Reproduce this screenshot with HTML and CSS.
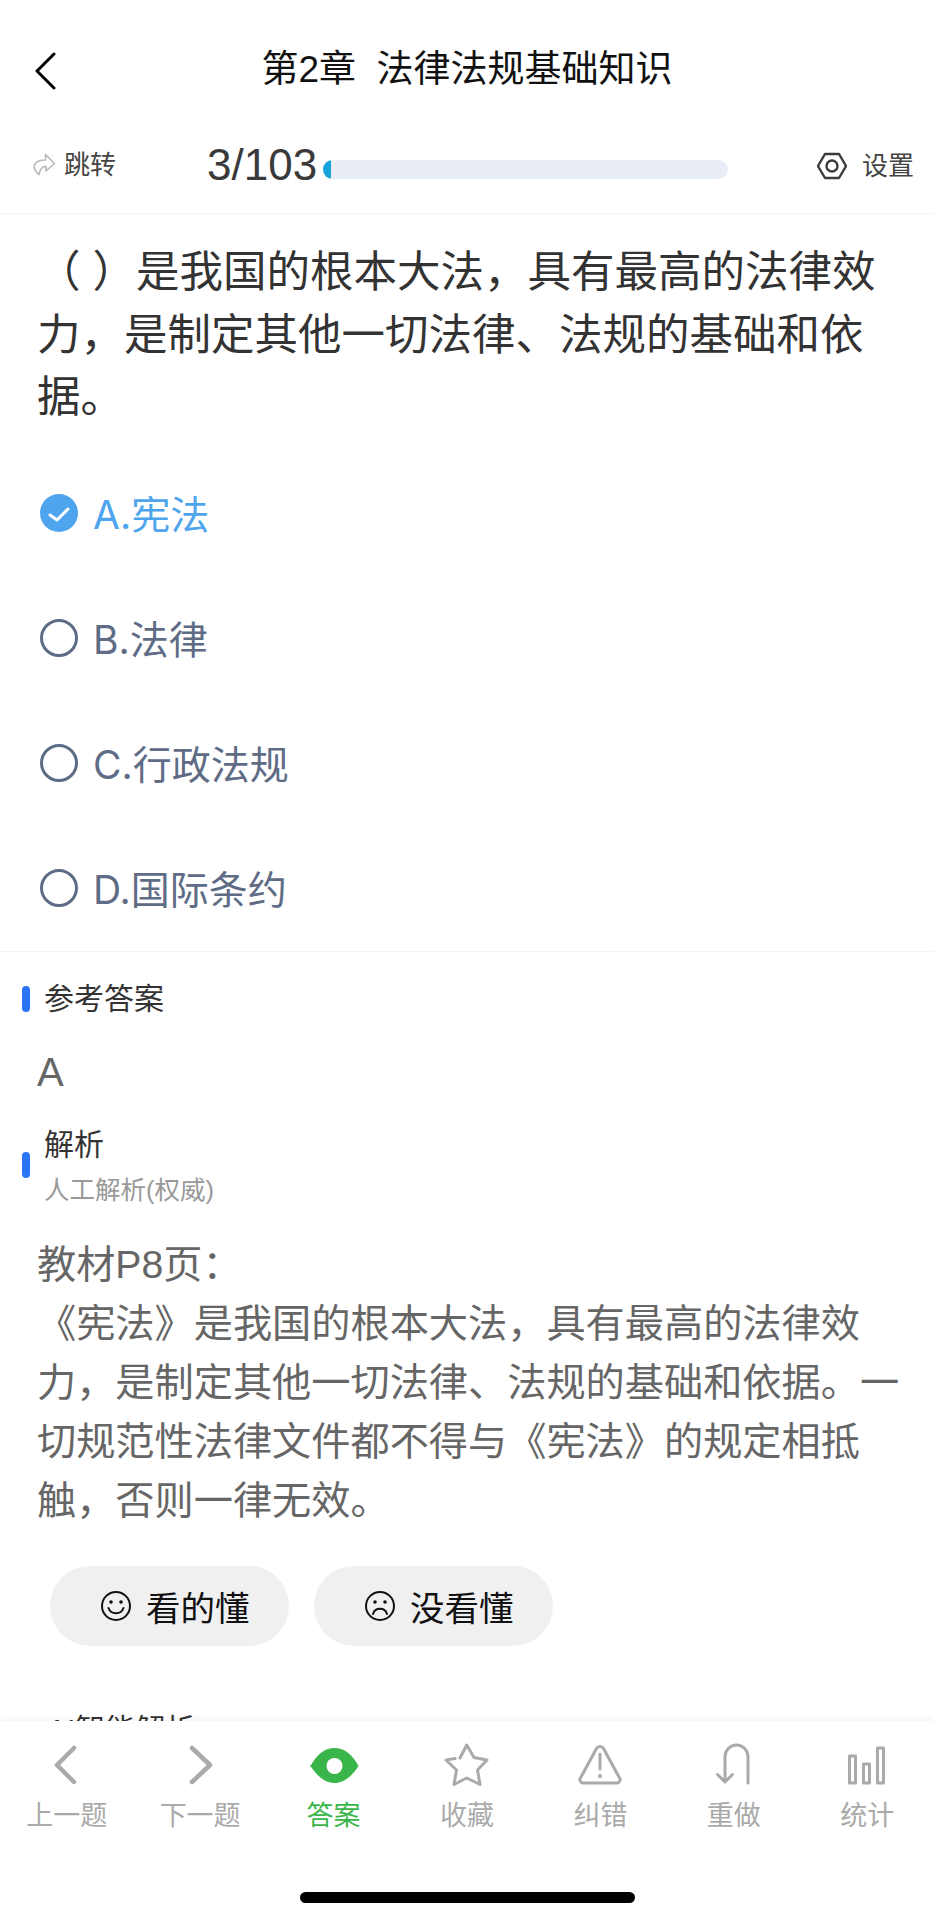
FILE: index.html
```html
<!DOCTYPE html>
<html lang="zh-CN">
<head>
<meta charset="utf-8">
<title>第2章 法律法规基础知识</title>
<link rel="stylesheet" href="styles.css">
</head>
<body>
<div class="page">
  <header class="nav">
    <svg class="back" width="24" height="38" viewBox="0 0 24 38"><path d="M20 2 L3 19 L20 36"/></svg>
    <h1 class="nav-title">第2章  法律法规基础知识</h1>
  </header>
  <div class="progress">
    <div class="jump">
      <svg class="jump-icon" width="24" height="24" viewBox="0 0 24 24"><path d="M13.5 1.5 L22.5 10.5 L14 18 V13.5 C10 13 8 16 7 21.5 C3 18 1 14 3 11 C5 7.5 10 7 13.5 7 Z"/></svg>
      <span>跳转</span>
    </div>
    <span class="count">3/103</span>
    <div class="bar"><div class="bar-fill"></div></div>
    <div class="settings">
      <svg class="gear" width="30" height="28" viewBox="0 0 30 28"><path d="M8 2 H22 L29 14 L22 26 H8 L1 14 Z"/><circle cx="15" cy="14" r="5.5"/></svg>
      <span>设置</span>
    </div>
  </div>

  <p class="question">（ ）是我国的根本大法，具有最高的法律效力，是制定其他一切法律、法规的基础和依据。</p>

  <ul class="options">
    <li class="option selected">
      <svg class="radio" width="38" height="38" viewBox="0 0 38 38"><circle class="radio-on" cx="19" cy="19" r="19"/><path class="radio-check" d="M10 21 L17 26 L28 15"/></svg>
      <span>A.宪法</span>
    </li>
    <li class="option">
      <svg class="radio" width="38" height="38" viewBox="0 0 38 38"><circle class="radio-off" cx="19" cy="19" r="17.5"/></svg>
      <span>B.法律</span>
    </li>
    <li class="option">
      <svg class="radio" width="38" height="38" viewBox="0 0 38 38"><circle class="radio-off" cx="19" cy="19" r="17.5"/></svg>
      <span>C.行政法规</span>
    </li>
    <li class="option">
      <svg class="radio" width="38" height="38" viewBox="0 0 38 38"><circle class="radio-off" cx="19" cy="19" r="17.5"/></svg>
      <span>D.国际条约</span>
    </li>
  </ul>

  <section class="answer">
    <div class="sec-head"><i class="sec-mark"></i><div class="sec-name">参考答案</div></div>
    <div class="answer-value">A</div>
  </section>

  <section class="analysis">
    <div class="sec-head">
      <i class="sec-mark"></i>
      <div>
        <div class="sec-name">解析</div>
        <div class="sec-sub">人工解析(权威)</div>
      </div>
    </div>
    <p class="analysis-text">教材P8页：<br>《宪法》是我国的根本大法，具有最高的法律效力，是制定其他一切法律、法规的基础和依据。一切规范性法律文件都不得与《宪法》的规定相抵触，否则一律无效。</p>
    <div class="feedback">
      <button class="fb-btn">
        <svg class="face" width="30" height="30" viewBox="0 0 30 30"><circle class="face-ring" cx="15" cy="15" r="14"/><circle class="face-eye" cx="10" cy="11" r="1.8"/><circle class="face-eye" cx="20" cy="11" r="1.8"/><path class="face-ring" d="M7.5 17 C10 24 20 24 22.5 17"/></svg>
        <span>看的懂</span>
      </button>
      <button class="fb-btn">
        <svg class="face" width="30" height="30" viewBox="0 0 30 30"><circle class="face-ring" cx="15" cy="15" r="14"/><circle class="face-eye" cx="10" cy="11" r="1.8"/><circle class="face-eye" cx="20" cy="11" r="1.8"/><path class="face-ring" d="M8 23 C10 16 20 16 22 23"/></svg>
        <span>没看懂</span>
      </button>
    </div>
  </section>

  <section class="ai">
    <div class="ai-name">AI智能解析</div>
  </section>

  <nav class="tabbar">
    <div class="tab">
      <svg class="tab-icon" width="50" height="50" viewBox="0 0 50 50"><path class="thick" d="M32 7 L15 24 L32 41"/></svg>
      <span>上一题</span>
    </div>
    <div class="tab">
      <svg class="tab-icon" width="50" height="50" viewBox="0 0 50 50"><path class="thick" d="M17 7 L35 24 L17 41"/></svg>
      <span>下一题</span>
    </div>
    <div class="tab active">
      <svg class="tab-icon" width="50" height="50" viewBox="0 0 50 50"><path class="eye" d="M2 25 C9 12 17 7.500 25.500 7.500 C34 7.500 42 12 49 25 C42 36 34 41.500 25.500 41.500 C17 41.500 9 36 2 25 Z"/><circle class="eye-pupil" cx="25.500" cy="25" r="8"/></svg>
      <span>答案</span>
    </div>
    <div class="tab">
      <svg class="tab-icon" width="50" height="50" viewBox="0 0 50 50"><path d="M18 17 L24.700 4 L32 16.500 L45 19 L35.500 29 L38 43.500 L24.700 37 L12 43.500 L14.500 29 L4 19 L13 17.500"/></svg>
      <span>收藏</span>
    </div>
    <div class="tab">
      <svg class="tab-icon" width="50" height="50" viewBox="0 0 50 50"><path d="M21.500 7.500 A4 4 0 0 1 28.500 7.500 L44 36 A3.500 3.500 0 0 1 41 42 H9 A3.500 3.500 0 0 1 6 36 Z"/><path d="M25 13 V28"/><circle class="warn-dot" cx="25" cy="35" r="2"/></svg>
      <span>纠错</span>
    </div>
    <div class="tab">
      <svg class="tab-icon" width="50" height="50" viewBox="0 0 50 50"><path d="M39 42 V16 A11.500 12 0 0 0 16 16 V41 M8.500 33.500 L16 41 L23.500 33.500"/></svg>
      <span>重做</span>
    </div>
    <div class="tab">
      <svg class="tab-icon" width="50" height="50" viewBox="0 0 50 50"><rect x="7.500" y="15" width="6" height="27"/><rect x="21.500" y="23" width="6" height="19"/><rect x="35.500" y="7" width="6" height="35"/></svg>
      <span>统计</span>
    </div>
    <div class="home-indicator"></div>
  </nav>
</div>
</body>
</html>
```

FILE: styles.css
```css
* { box-sizing: border-box; }
html, body { margin: 0; padding: 0; background: #fff; }
body { font-family: "Liberation Sans", "Noto Sans CJK SC", sans-serif; color: #333; }
.page { position: relative; width: 934px; height: 1920px; overflow: hidden; background: #fff; }
p, ul, h1 { margin: 0; padding: 0; }
ul { list-style: none; }

/* header */
.nav { position: relative; display: flex; align-items: center; justify-content: center; height: 136px; padding-top: 4px; }
.back { position: absolute; left: 34px; top: 52px; fill: none; stroke: #000; stroke-width: 3; stroke-linecap: round; stroke-linejoin: round; }
.nav-title { font-size: 37px; font-weight: 400; color: #111; white-space: pre; line-height: 48px; }

/* progress */
.progress { display: flex; align-items: center; height: 78px; padding: 0 20px 20px 32px; border-bottom: 1px solid #f3f3f3; }
.jump { display: flex; align-items: center; gap: 8px; width: 175px; font-size: 26px; line-height: 30px; color: #444; }
.jump-icon { fill: none; stroke: #b8b8b8; stroke-width: 1.6; stroke-linejoin: round; }
.count { font-size: 44px; line-height: 50px; color: #3a3a3a; width: 116px; white-space: nowrap; }
.bar { width: 405px; height: 19px; margin-top: 10px; border-radius: 10px; background: #e9edf5; overflow: hidden; }
.bar-fill { width: 8px; height: 100%; background: #16a3dc; }
.settings { display: flex; align-items: center; gap: 15px; margin-left: auto; font-size: 26px; line-height: 30px; color: #444; }
.settings span { margin-top: 2px; }
.gear { margin-top: 2px; fill: none; stroke: #3c3c3c; stroke-width: 2.4; stroke-linejoin: round; }

/* question */
.question { margin-top: 27px; padding: 0 37px; font-size: 43.500px; line-height: 62.500px; color: #333; }

/* options */
.options { margin-top: 22px; border-bottom: 1px solid #f3f3f3; }
.option { display: flex; align-items: center; gap: 15px; height: 125px; padding-left: 40px; font-family: "Inter", "Noto Sans CJK SC", sans-serif; font-size: 39px; line-height: 48px; color: #5e6c85; }
.option span { margin-top: 3px; }
.option.selected { color: #4ea5ee; }
.radio { flex: none; }
.radio-on { fill: #4ea5ee; }
.radio-check { fill: none; stroke: #fff; stroke-width: 3; stroke-linecap: round; stroke-linejoin: round; }
.radio-off { fill: none; stroke: #5e6c85; stroke-width: 3; }

/* sections */
.answer { padding-top: 27px; }
.sec-head { display: flex; align-items: center; gap: 14px; padding-left: 22px; }
.sec-mark { flex: none; width: 8px; height: 26px; border-radius: 4px; background: #2a75f5; }
.sec-name { font-size: 30px; line-height: 40px; color: #333; }
.sec-sub { margin-top: 10px; font-size: 25.500px; line-height: 30px; color: #999; }
.answer-value { margin-top: 28px; padding-left: 37px; font-size: 40px; line-height: 50px; color: #666; }
.analysis { margin-top: 28px; }
.analysis-text { margin-top: 30px; padding: 0 30px 0 37px; font-size: 39.200px; line-height: 59px; color: #666; }
.feedback { display: flex; gap: 25px; margin-top: 36px; padding-left: 50px; }
.fb-btn { display: flex; align-items: center; gap: 15px; width: 239px; height: 80px; padding: 0 0 0 51px; border: 0; border-radius: 40px; background: #f0f0f0; font: inherit; font-size: 34.500px; color: #111; }
.face { flex: none; }
.face-ring { fill: none; stroke: #111; stroke-width: 2; stroke-linecap: round; }
.face-eye { fill: #111; }

.ai { margin-top: 64px; padding-left: 47px; }
.ai-name { font-size: 30px; line-height: 40px; color: #333; }

/* tab bar */
.tabbar { position: absolute; left: 0; right: 0; bottom: 0; height: 199px; padding-top: 20px; display: grid; grid-template-columns: repeat(7, 1fr); align-items: start; background: #fff; box-shadow: 0 -3px 4px rgba(0, 0, 0, 0.04); }
.tab { display: flex; flex-direction: column; align-items: center; font-size: 27px; line-height: 36px; color: #aaa; }
.tab-icon { margin-bottom: 7px; fill: none; stroke: #aaa; stroke-width: 3; stroke-linecap: round; stroke-linejoin: round; }
.tab-icon .thick { stroke-width: 4.500; }
.tab-icon .eye { fill: #3ab54a; stroke: #3ab54a; stroke-width: 1; }
.tab-icon .eye-pupil { fill: #fff; stroke: none; }
.tab-icon .warn-dot { fill: #aaa; stroke: none; }
.tab.active { color: #3ab54a; }
.home-indicator { position: absolute; left: 300px; top: 171px; width: 335px; height: 11px; border-radius: 6px; background: #000; }
```
